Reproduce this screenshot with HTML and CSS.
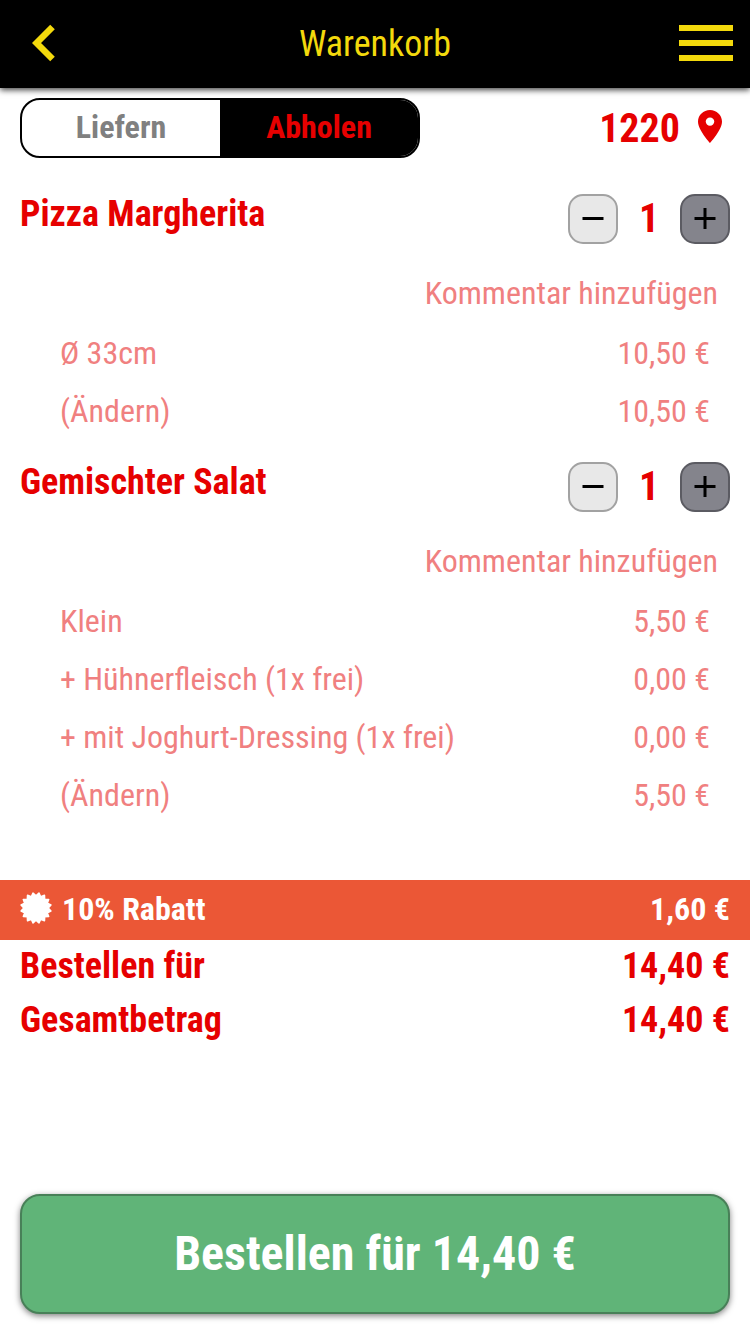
FILE: index.html
```html
<!DOCTYPE html>
<html lang="de">
<head>
<meta charset="utf-8">
<title>Warenkorb</title>
<link rel="stylesheet" href="styles.css">
</head>
<body>
<header class="topbar">
  <svg class="back" viewBox="0 0 24 38" width="24" height="38"><path d="M20.500 3 4.500 19 20.500 35" fill="none" stroke="#f3d90c" stroke-width="6.500"/></svg>
  <h1 class="topbar-title">Warenkorb</h1>
  <div class="menu"><i></i><i></i><i></i></div>
</header>
<main class="cart">
  <div class="mode-row">
    <div class="toggle">
      <div class="toggle-option">Liefern</div>
      <div class="toggle-option active">Abholen</div>
    </div>
    <div class="zip"><span>1220</span>
      <svg viewBox="5 2 14 20" width="24" height="33" preserveAspectRatio="none"><path fill="#e60000" d="M12 2C8.130 2 5 5.130 5 9c0 5.250 7 13 7 13s7-7.750 7-13c0-3.870-3.130-7-7-7zm0 9.500a2.500 2.500 0 1 1 0-5 2.500 2.500 0 0 1 0 5z"/></svg>
    </div>
  </div>

  <section class="item">
    <div class="item-head">
      <h2 class="item-name">Pizza Margherita</h2>
      <div class="stepper">
        <button class="step minus"><svg viewBox="0 0 22 22" width="22" height="22"><path d="M.5 10.500H21.500" stroke="#000" stroke-width="3"/></svg></button>
        <span class="count">1</span>
        <button class="step plus"><svg viewBox="0 0 22 22" width="22" height="22"><path d="M.5 10.500H21.500M11 0V21" stroke="#000" stroke-width="3"/></svg></button>
      </div>
    </div>
    <div class="comment">Kommentar hinzufügen</div>
    <div class="line"><span>Ø 33cm</span><span>10,50 €</span></div>
    <div class="line"><span>(Ändern)</span><span>10,50 €</span></div>
  </section>

  <section class="item">
    <div class="item-head">
      <h2 class="item-name">Gemischter Salat</h2>
      <div class="stepper">
        <button class="step minus"><svg viewBox="0 0 22 22" width="22" height="22"><path d="M.5 10.500H21.500" stroke="#000" stroke-width="3"/></svg></button>
        <span class="count">1</span>
        <button class="step plus"><svg viewBox="0 0 22 22" width="22" height="22"><path d="M.5 10.500H21.500M11 0V21" stroke="#000" stroke-width="3"/></svg></button>
      </div>
    </div>
    <div class="comment">Kommentar hinzufügen</div>
    <div class="line"><span>Klein</span><span>5,50 €</span></div>
    <div class="line"><span>+ Hühnerfleisch (1x frei)</span><span>0,00 €</span></div>
    <div class="line"><span>+ mit Joghurt-Dressing (1x frei)</span><span>0,00 €</span></div>
    <div class="line"><span>(Ändern)</span><span>5,50 €</span></div>
  </section>

  <div class="discount">
    <svg class="badge" viewBox="-16 -16 32 32" width="32" height="32"><path fill="#fff" stroke="#fff" stroke-width="1.600" stroke-linejoin="round" d="M0 -12.200 2.970 -14.900 4.670 -11.270 8.440 -12.640 8.630 -8.630 12.640 -8.440 11.270 -4.670 14.900 -2.970 12.200 0 14.900 2.970 11.270 4.670 12.640 8.440 8.630 8.630 8.440 12.640 4.670 11.270 2.970 14.900 0 12.200 -2.970 14.900 -4.670 11.270 -8.440 12.640 -8.630 8.630 -12.640 8.440 -11.270 4.670 -14.900 2.970 -12.200 0 -14.900 -2.970 -11.270 -4.670 -12.640 -8.440 -8.630 -8.630 -8.440 -12.640 -4.670 -11.270 -2.970 -14.900Z"/></svg>
    <span class="discount-label">10% Rabatt</span><span>1,60 €</span>
  </div>
  <div class="totals">
    <div class="total"><span>Bestellen für</span><span>14,40 €</span></div>
    <div class="total"><span>Gesamtbetrag</span><span>14,40 €</span></div>
  </div>
</main>
<footer class="footer"><button class="order">Bestellen für 14,40 €</button></footer>
</body>
</html>
```
FILE: styles.css
```css
* { box-sizing: border-box; }
body {
  margin: 0;
  height: 1334px;
  display: flex;
  flex-direction: column;
  overflow: hidden;
  background: #fff;
  color: #e60000;
  font-family: "Roboto Condensed", Roboto, sans-serif;
  font-stretch: 75%;
  font-size: 32px;
  white-space: nowrap;
}
h1, h2 { margin: 0; }
button { font: inherit; padding: 0; }
svg { display: block; }
.topbar {
  height: 88px;
  padding: 0 17px 2px 17px;
  display: grid;
  grid-template-columns: 54px 1fr 54px;
  align-items: center;
  background: #000;
  color: #f3d90c;
  box-shadow: 0 2px 6px rgba(0, 0, 0, .75);
}
.back { margin-left: 15px; }
.topbar-title { font-size: 36px; font-weight: 400; text-align: center; padding-top: 2px; }
.menu { display: grid; gap: 9px; }
.menu i { height: 6px; background: #f3d90c; }
.cart { flex: 1; }
.mode-row { display: flex; justify-content: space-between; padding: 10px 28px 26px 20px; }
.toggle {
  width: 400px;
  height: 60px;
  display: flex;
  border: 2px solid #000;
  border-radius: 20px;
  overflow: hidden;
  font-weight: 700;
}
.toggle-option { flex: 1; display: grid; place-items: center; padding-bottom: 2px; color: #808080; }
.toggle-option.active { background: #000; color: #e60000; }
.zip { display: flex; align-items: center; gap: 18px; font-size: 40px; font-weight: 700; }
.zip svg { margin-bottom: 3px; }
.item { padding: 10px 20px 12px; }
.item-head { display: flex; justify-content: space-between; height: 50px; margin-bottom: 20px; }
.item-name { font-size: 36px; line-height: 40px; }
.stepper { display: grid; grid-template-columns: 50px 62px 50px; align-items: center; text-align: center; }
.step { width: 50px; height: 50px; display: grid; place-items: center; border-radius: 15px; border: 2px solid; }
.minus { background: #e8e8e8; border-color: #a2a2a2; }
.plus { background: #84848c; border-color: #5b5b62; }
.count { font-size: 40px; line-height: 50px; font-weight: 700; }
.comment, .line { color: #f08080; line-height: 58px; }
.comment { height: 60px; padding-right: 12px; text-align: right; }
.line { height: 58px; display: flex; justify-content: space-between; padding: 0 20px 0 40px; }
.discount {
  height: 60px;
  margin-top: 44px;
  padding: 0 20px 2px;
  display: flex;
  align-items: center;
  background: #eb5736;
  color: #fff;
  font-weight: 700;
}
.badge { margin-bottom: 2px; }
.discount-label { margin: 0 auto 0 10px; }
.totals { display: grid; gap: 2px; padding: 0 20px; font-size: 36px; font-weight: 700; line-height: 52px; }
.total { display: flex; justify-content: space-between; }
.footer { padding: 0 20px 20px; }
.order {
  width: 100%;
  height: 120px;
  padding-bottom: 2px;
  border: 2px solid #488058;
  border-radius: 20px;
  background: #60b478;
  color: #fff;
  font-size: 48px;
  font-weight: 700;
  box-shadow: 0 2px 6px rgba(0, 0, 0, .5);
}
```
